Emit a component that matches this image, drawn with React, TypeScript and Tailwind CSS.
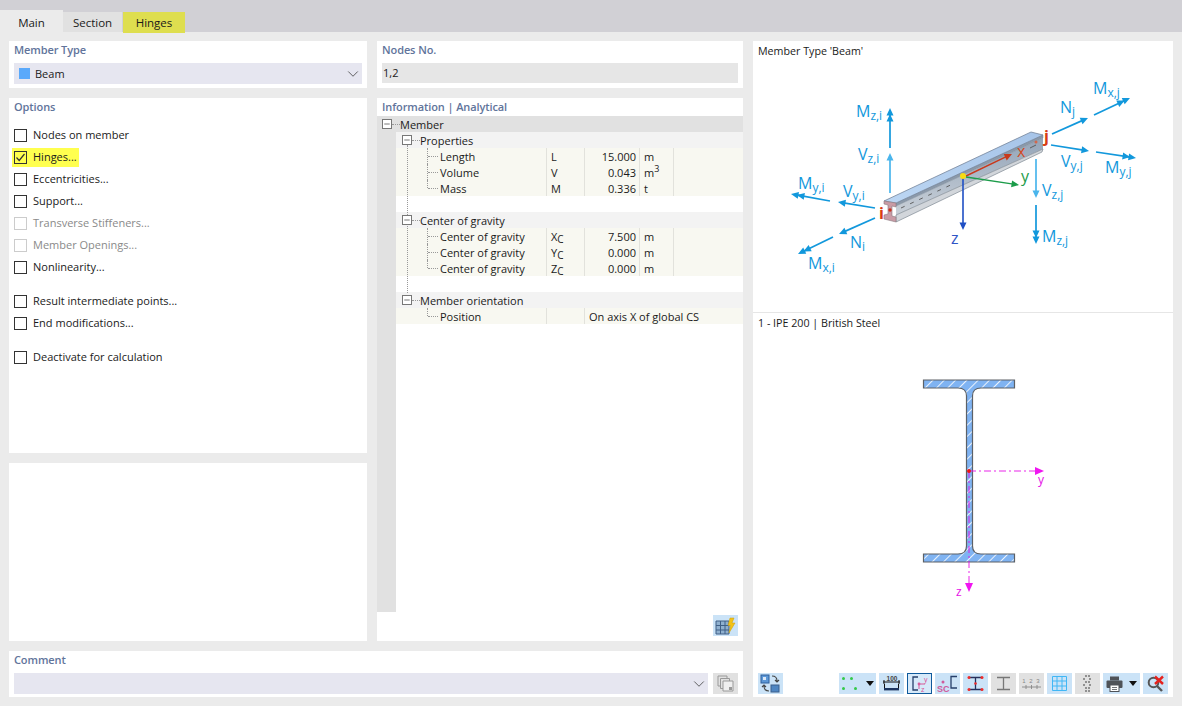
import { ChevronDown, Minus } from "lucide-react";

const options = [
  { label: "Nodes on member" },
  { label: "Hinges...", checked: true },
  { label: "Eccentricities..." },
  { label: "Support..." },
  { label: "Transverse Stiffeners...", disabled: true },
  { label: "Member Openings...", disabled: true },
  { label: "Nonlinearity..." },
  { gap: 12, label: "Result intermediate points..." },
  { label: "End modifications..." },
  { gap: 12, label: "Deactivate for calculation" },
];

function Heading({ children }: { children: React.ReactNode }) {
  return <div className="h-[18px] pl-[5px] pt-[1px] text-[11px] font-semibold leading-[16px] tracking-[-0.1px] text-[#61749b]">{children}</div>;
}

function Expander() {
  return (
    <span className="relative z-10 flex h-[10px] w-[10px] shrink-0 items-center justify-center border border-[#777] bg-white">
      <Minus size={8} strokeWidth={2} className="text-[#333]" />
    </span>
  );
}

function GroupRow({ label, top }: { label: string; top?: boolean }) {
  return (
    <div className={top ? "flex h-4 items-center bg-[#e1e1e1] pl-[5px]" : "ml-[19px] flex h-4 items-center bg-[#f3f3f3] pl-[6px]"}>
      <Expander />
      <span className="w-[8px] border-t border-dotted border-[#999]" />
      <span className="relative top-[1px]">{label}</span>
    </div>
  );
}

function DataRow({ name, sym, sub, value, unit, sup, wide, last }: { name: string; sym?: string; sub?: string; value?: string; unit?: string; sup?: string; wide?: boolean; last?: boolean }) {
  return (
    <div className="relative ml-[19px] flex h-4 items-center bg-[#f8f8f1] pt-[2px]">
      <span className={last ? "absolute left-[31px] top-0 h-[8px] border-l border-dotted border-[#999]" : "absolute left-[31px] top-0 h-4 border-l border-dotted border-[#999]"} />
      <span className="absolute left-[32px] top-[8px] w-[10px] border-t border-dotted border-[#999]" />
      <span className="w-[150px] shrink-0 pl-[44px]">{name}</span>
      <span className="-mt-[2px] flex h-4 w-[38px] shrink-0 items-center border-l border-[#e2e2dc] pl-[4px] pt-[2px]">
        {sym}
        {sub && <span className="relative top-[2px] text-[10px]">{sub}</span>}
      </span>
      {wide ? (
        <span className="-mt-[2px] flex h-4 flex-1 items-center border-l border-[#e2e2dc] pl-[4px] pt-[2px]">{value}</span>
      ) : (
        <>
          <span className="-mt-[2px] flex h-4 w-[55px] shrink-0 items-center justify-end border-l border-[#e2e2dc] pr-[3px] pt-[2px]">{value}</span>
          <span className="-mt-[2px] flex h-4 w-[34px] shrink-0 items-center border-l border-[#e2e2dc] pl-[4px] pt-[2px]">
            {unit}
            {sup && <sup className="text-[9px]">{sup}</sup>}
          </span>
          <span className="-mt-[2px] h-4 flex-1 border-l border-[#e2e2dc]" />
        </>
      )}
    </div>
  );
}

function Arrow({ x1, y1, x2, y2, color = "#1298dc", double, width = 1.7 }: { x1: number; y1: number; x2: number; y2: number; color?: string; double?: boolean; width?: number }) {
  const dx = x2 - x1;
  const dy = y2 - y1;
  const len = Math.hypot(dx, dy);
  const ux = dx / len;
  const uy = dy / len;
  const head = (d: number) => {
    const tx = x2 - ux * d;
    const ty = y2 - uy * d;
    const bx = tx - ux * 7.5;
    const by = ty - uy * 7.5;
    return `${tx},${ty} ${bx - uy * 3.5},${by + ux * 3.5} ${bx + uy * 3.5},${by - ux * 3.5}`;
  };
  return (
    <g>
      <line x1={x1} y1={y1} x2={x2 - ux * 4} y2={y2 - uy * 4} stroke={color} strokeWidth={width} />
      <polygon points={head(0)} fill={color} />
      {double && <polygon points={head(6)} fill={color} />}
    </g>
  );
}

function ForceLabel({ x, y, m, s }: { x: number; y: number; m: string; s: string }) {
  return (
    <text x={x} y={y} fill="#1298dc" fontSize="16" fontFamily="'Open Sans', sans-serif">
      {m}
      <tspan fontSize="12" dy="3">{s}</tspan>
    </text>
  );
}

function BeamDiagram() {
  return (
    <svg viewBox="753 60 420 252" className="block h-[252px] w-[420px]">
      <defs>
        <linearGradient id="top" x1="0" y1="1" x2="1" y2="0">
          <stop offset="0" stopColor="#bcd6f3" />
          <stop offset="1" stopColor="#a6c4e8" />
        </linearGradient>
        <linearGradient id="web" x1="0" y1="0" x2="0" y2="1">
          <stop offset="0" stopColor="#93a4b8" />
          <stop offset="1" stopColor="#c9d0d8" />
        </linearGradient>
      </defs>
      {/* web, between the flanges */}
      <polygon points="896,206 1043,138 1043,149 896,215" fill="url(#web)" />
      {/* bottom flange */}
      <polygon points="896,215 1043,149 1042,152 896,222" fill="#d2d6db" stroke="#7f8994" strokeWidth="0.7" />
      {/* top flange */}
      <polygon points="896,203 1043,135 1043,138 896,206" fill="#8b99aa" stroke="#7d8a99" strokeWidth="0.5" />
      <polygon points="884,201 1031,132 1043,135 896,203" fill="url(#top)" stroke="#76859a" strokeWidth="0.8" />
      <line x1="901" y1="208" x2="955" y2="183" stroke="#555" strokeWidth="0.9" strokeDasharray="4 6" />
      <line x1="1030" y1="148" x2="1036" y2="145" stroke="#555" strokeWidth="0.9" />
      {/* end face */}
      <polygon points="884,201 896,203 896,207 892,206 892,216 896,217 896,222 884,219 884,215 888,214 888,205 884,204" fill="#c99ba5" stroke="#8a7a80" strokeWidth="0.6" />
      <circle cx="890" cy="210" r="1.7" fill="#c9331f" />
      <circle cx="1036" cy="142" r="1.5" fill="#d2674c" />

      <Arrow x1={890} y1={148} x2={890} y2={108} double />
      <Arrow x1={890} y1={193} x2={890} y2={153} color="#4ab5ec" />
      <Arrow x1={830} y1={201} x2={791} y2={194} double />
      <Arrow x1={875} y1={208} x2={838} y2={202} />
      <Arrow x1={875} y1={218} x2={839} y2={234} />
      <Arrow x1={833} y1={237} x2={798} y2={254} double />
      <Arrow x1={1052} y1={134} x2={1088} y2={118} />
      <Arrow x1={1094} y1={115} x2={1130} y2={98} double />
      <Arrow x1={1051} y1={145} x2={1089} y2={151} />
      <Arrow x1={1096} y1={152} x2={1136} y2={158} double />
      <Arrow x1={1036} y1={159} x2={1036} y2={198} color="#4ab5ec" />
      <Arrow x1={1036} y1={205} x2={1036} y2={244} double />
      <Arrow x1={966} y1={176} x2={1012} y2={154} color="#c8391c" width={1.4} />
      <Arrow x1={966} y1={177} x2={1019} y2={185} color="#1c9c4a" width={1.4} />
      <Arrow x1={963} y1={177} x2={963} y2={230} color="#1f4fc4" width={1.6} />
      <circle cx="963" cy="176" r="3" fill="#f7dc12" />

      <text x="1017" y="157" fill="#d4491f" fontSize="16" fontFamily="'Open Sans', sans-serif">x</text>
      <text x="1021" y="182" fill="#1c9c4a" fontSize="16" fontFamily="'Open Sans', sans-serif">y</text>
      <text x="951" y="244" fill="#2f55c6" fontSize="16" fontFamily="'Open Sans', sans-serif">z</text>
      <text x="879" y="219" fill="#d83b12" fontSize="16" fontWeight="700" fontFamily="'Open Sans', sans-serif">i</text>
      <text x="1044" y="142" fill="#d83b12" fontSize="16" fontWeight="700" fontFamily="'Open Sans', sans-serif">j</text>

      <ForceLabel x={856} y={117} m="M" s="z,i" />
      <ForceLabel x={858} y={160} m="V" s="z,i" />
      <ForceLabel x={798} y={189} m="M" s="y,i" />
      <ForceLabel x={843} y={197} m="V" s="y,i" />
      <ForceLabel x={850} y={248} m="N" s="i" />
      <ForceLabel x={808} y={269} m="M" s="x,i" />
      <ForceLabel x={1060} y={113} m="N" s="j" />
      <ForceLabel x={1093} y={94} m="M" s="x,j" />
      <ForceLabel x={1061} y={167} m="V" s="y,j" />
      <ForceLabel x={1105} y={173} m="M" s="y,j" />
      <ForceLabel x={1042} y={196} m="V" s="z,j" />
      <ForceLabel x={1042} y={242} m="M" s="z,j" />
    </svg>
  );
}

function SectionDiagram() {
  return (
    <svg viewBox="753 331 420 342" className="block h-[342px] w-[420px]">
      <defs>
        <pattern id="hatch" width="8" height="8" patternUnits="userSpaceOnUse" patternTransform="rotate(-45)">
          <rect width="8" height="8" fill="#7fb3f2" />
          <rect width="8" height="1" fill="#eaf2fc" />
        </pattern>
      </defs>
      <path
        d="M923.5 380 H1014.5 V388 H981 Q972.5 388 972.5 396 V546 Q972.5 554 981 554 H1014.5 V562 H923.5 V554 H958 Q966.5 554 966.5 546 V396 Q966.5 388 958 388 H923.5 Z"
        fill="url(#hatch)"
        stroke="#5d6166"
        strokeWidth="1.2"
      />
      <line x1="969" y1="471" x2="1036" y2="471" stroke="#e60fe6" strokeWidth="0.9" strokeDasharray="7 3 2 3" />
      <line x1="969" y1="471" x2="969" y2="584" stroke="#e60fe6" strokeWidth="0.9" strokeDasharray="7 3 2 3" />
      <polygon points="1035,467 1044,471 1035,475" fill="#f015f0" />
      <polygon points="965,583 973,583 969,592" fill="#f015f0" />
      <circle cx="969" cy="471" r="2" fill="#f01515" />
      <text x="1038" y="484" fill="#e60fe6" fontSize="12" fontFamily="'Open Sans', sans-serif">y</text>
      <text x="956" y="596" fill="#e60fe6" fontSize="12" fontFamily="'Open Sans', sans-serif">z</text>
    </svg>
  );
}

function ToolBtn({ children, gray, active, w = "w-[25px]" }: { children: React.ReactNode; gray?: boolean; active?: boolean; w?: string }) {
  const tone = active ? "border-[1.5px] border-[#0f5a9c] bg-[#d6e9f9]" : gray ? "bg-[#e1e1e1]" : "bg-[#cbe3f7]";
  return <div className={`flex h-[21px] ${w} shrink-0 items-center justify-center ${tone}`}>{children}</div>;
}

function Caret() {
  return <svg width="8" height="5" viewBox="0 0 8 5" className="ml-[6px]"><polygon points="0,0 8,0 4,5" fill="#111" /></svg>;
}

function Toolbar() {
  return (
    <div className="flex h-[21px] items-center pl-[5px] pr-[5px]">
      <ToolBtn>
        <svg width="21" height="19" viewBox="0 0 21 19">
          <rect x="1" y="1" width="8" height="8" fill="#5c97d6" stroke="#2d5f9c" />
          <rect x="3" y="3" width="3" height="3" fill="#dbe8f6" />
          <path d="M12 2 q5 0 5 5 M15 6 l2 2 l2-2 M9 17 q-5 0-5-5 M2 13 l2-2 l2 2" fill="none" stroke="#444" strokeWidth="1.1" />
          <rect x="11" y="11" width="8" height="7" fill="#4f86c2" stroke="#3a5f8c" />
        </svg>
      </ToolBtn>
      <div className="ml-[56px]" />
      <ToolBtn w="w-[37px]">
        <svg width="19" height="15" viewBox="0 0 19 15">
          <circle cx="2.5" cy="2.5" r="1.5" fill="#34c94a" />
          <circle cx="10.5" cy="2.5" r="1.5" fill="#34c94a" />
          <circle cx="2.5" cy="12.5" r="1.5" fill="#34c94a" />
          <circle cx="14.5" cy="12.5" r="1.5" fill="#34c94a" />
        </svg>
        <Caret />
      </ToolBtn>
      <div className="ml-[3px]" />
      <ToolBtn>
        <svg width="19" height="17" viewBox="0 0 19 17">
          <text x="10" y="5.5" textAnchor="middle" fontSize="6.5" fontWeight="700" fill="#444" fontFamily="'Liberation Sans', sans-serif">100</text>
          <path d="M1 7 H18 M2 5 V9 M17 5 V9 M2.5 9 V13 M16.5 9 V13" stroke="#111" strokeWidth="1" fill="none" />
          <rect x="2" y="13" width="15" height="2.4" fill="#1d3560" />
        </svg>
      </ToolBtn>
      <div className="ml-[3px]" />
      <ToolBtn active>
        <svg width="19" height="17" viewBox="0 0 19 17">
          <path d="M8 2 H3 V15 H8" fill="none" stroke="#27406b" strokeWidth="1.3" />
          <path d="M9 9 H15 M9 9 V14" stroke="#d65a9a" strokeWidth="1" />
          <circle cx="9" cy="9" r="1.4" fill="#d65a9a" />
          <text x="14" y="7" fontSize="7" fill="#d65a9a" fontFamily="'Liberation Sans', sans-serif">y</text>
          <text x="11" y="16.5" fontSize="7" fill="#d65a9a" fontFamily="'Liberation Sans', sans-serif">z</text>
        </svg>
      </ToolBtn>
      <div className="ml-[3px]" />
      <ToolBtn>
        <svg width="21" height="18" viewBox="0 0 21 18">
          <circle cx="6" cy="7" r="1.5" fill="#cf5b9c" />
          <text x="0" y="16.5" fontSize="9" fontWeight="700" fill="#cf5b9c" fontFamily="'Liberation Sans', sans-serif">SC</text>
          <path d="M20 1.5 H14 V13 H20" fill="none" stroke="#27406b" strokeWidth="1.3" />
        </svg>
      </ToolBtn>
      <div className="ml-[3px]" />
      <ToolBtn>
        <svg width="19" height="17" viewBox="0 0 19 17">
          <path d="M3 2.5 H16 M9.5 2.5 V14.5 M3 14.5 H16" stroke="#27315c" strokeWidth="1.3" />
          <circle cx="3" cy="2.5" r="1.5" fill="#ee2b2b" />
          <circle cx="16" cy="2.5" r="1.5" fill="#ee2b2b" />
          <circle cx="9.5" cy="8.5" r="1.3" fill="#ee2b2b" />
          <circle cx="3" cy="14.5" r="1.5" fill="#ee2b2b" />
          <circle cx="16" cy="14.5" r="1.5" fill="#ee2b2b" />
        </svg>
      </ToolBtn>
      <div className="ml-[3px]" />
      <ToolBtn gray>
        <svg width="19" height="17" viewBox="0 0 19 17">
          <path d="M3 2.5 H16 M3 14.5 H16 M9.5 2.5 V14.5" stroke="#777" strokeWidth="1.3" />
        </svg>
      </ToolBtn>
      <div className="ml-[3px]" />
      <ToolBtn gray>
        <svg width="21" height="17" viewBox="0 0 21 17">
          <text x="10.5" y="7.5" textAnchor="middle" fontSize="6" letterSpacing="1" fill="#888" fontFamily="'Liberation Sans', sans-serif">1 2 3</text>
          <path d="M1 12 H20 M5 10 V14 M10.5 10 V14 M16 10 V14" stroke="#888" strokeWidth="0.9" />
        </svg>
      </ToolBtn>
      <div className="ml-[3px]" />
      <ToolBtn>
        <svg width="15" height="15" viewBox="0 0 15 15">
          <path d="M.5 .5 H14.5 V14.5 H.5 Z M5 .5 V14.5 M10 .5 V14.5 M.5 5 H14.5 M.5 10 H14.5" fill="none" stroke="#41b7f5" strokeWidth="1" />
        </svg>
      </ToolBtn>
      <div className="ml-[3px]" />
      <ToolBtn gray>
        <svg width="11" height="17" viewBox="0 0 11 17">
          <path d="M3 1 H8 M1 4 H4 M7 4 H10 M3 7 H8 M1 10 H4 M7 10 H10 M3 13 H8 M3 16 H8" stroke="#777" strokeWidth="1.4" strokeDasharray="2 1" />
        </svg>
      </ToolBtn>
      <div className="ml-[3px]" />
      <ToolBtn w="w-[37px]">
        <svg width="17" height="16" viewBox="0 0 17 16">
          <rect x="4" y="0.5" width="9" height="4" fill="#4f5358" />
          <rect x="0.5" y="4.5" width="16" height="7.5" rx="1" fill="#4f5358" />
          <rect x="4" y="9" width="9" height="6.5" fill="#fff" stroke="#4f5358" />
          <path d="M6 11.5 H11 M6 13.5 H11" stroke="#4f5358" strokeWidth="0.8" />
        </svg>
        <Caret />
      </ToolBtn>
      <div className="ml-[3px]" />
      <ToolBtn>
        <svg width="20" height="18" viewBox="0 0 20 18">
          <circle cx="7.5" cy="7.5" r="4.8" fill="none" stroke="#555" strokeWidth="2" />
          <path d="M11 11 L16 16" stroke="#555" strokeWidth="2.4" />
          <path d="M9 1.5 L17 9 M17 1.5 L9 9" stroke="#e5231f" strokeWidth="2.4" />
        </svg>
      </ToolBtn>
    </div>
  );
}

export default function App() {
  return (
    <div className="flex h-[706px] w-[1182px] flex-col overflow-hidden bg-[#ebebeb] font-['Open_Sans',sans-serif] text-[11px] text-[#1a1a1a]">
      {/* TABS */}
      <div className="flex h-[32px] shrink-0 items-end bg-[#d1d0d5] text-[11.5px]">
        <div className="flex h-[22px] w-[63px] items-center justify-center bg-[#ebebeb] pt-[3px]">Main</div>
        <div className="flex h-[20px] w-[59px] items-center justify-center bg-[#e1e1e1] pt-[2px]">Section</div>
        <div className="relative ml-[1px] -mb-[1px] flex h-[21px] w-[62px] items-center justify-center bg-[#dede4f]">Hinges</div>
      </div>

      <div className="flex flex-1 gap-[10px] px-[9px] pb-[9px] pt-[9px]">
        <div className="flex w-[734px] flex-col gap-[10px]">
          <div className="flex flex-1 gap-[10px]">
            {/* LEFT */}
            <div className="flex w-[358px] flex-col gap-[10px]">
              <div className="h-[47px] bg-white">
                <Heading>Member Type</Heading>
                <div className="mx-[5px] mt-[4px] flex h-[21px] items-center bg-[#e6e6f0] pl-[5px]">
                  <span className="h-[11px] w-[11px] bg-[#5aa9fb]" />
                  <span className="ml-[5px] flex-1 pt-[2px]">Beam</span>
                  <ChevronDown size={18} strokeWidth={1.1} className="text-[#444]" />
                </div>
              </div>

              <div className="h-[355px] bg-white">
                <Heading>Options</Heading>
                <div className="mt-[8px] flex flex-col">
                  {options.map((o) => (
                    <div key={o.label} style={{ marginTop: o.gap ?? 0 }} className={o.disabled ? "flex h-[22px] items-center pl-[5px] text-[#8a8a8a]" : "flex h-[22px] items-center pl-[5px]"}>
                      <span className={o.checked ? "-ml-[2px] flex h-[19px] items-center bg-[#ffff4f] pl-[2px] pr-[2px]" : "flex h-[19px] items-center"}>
                        <span className={o.disabled ? "flex h-[13px] w-[13px] items-center justify-center border border-[#cccccc]" : "flex h-[13px] w-[13px] items-center justify-center border border-[#333]"}>
                          {o.checked && (
                            <svg width="11" height="11" viewBox="0 0 11 11"><path d="M1.5 5.5 L4.2 8.5 L9.5 2" fill="none" stroke="#333" strokeWidth="1.2" /></svg>
                          )}
                        </span>
                        <span className="ml-[6px]">{o.label}</span>
                      </span>
                    </div>
                  ))}
                </div>
              </div>

              <div className="flex-1 bg-white" />
            </div>

            {/* MIDDLE */}
            <div className="flex flex-1 flex-col gap-[10px]">
              <div className="h-[47px] bg-white">
                <Heading>Nodes No.</Heading>
                <div className="mx-[5px] mt-[4px] flex h-[20px] items-center bg-[#e6e6e6] pl-[1px] pt-[1px]">1,2</div>
              </div>

              <div className="flex flex-1 flex-col bg-white">
                <Heading>Information | Analytical</Heading>
                <div className="relative flex-1 overflow-hidden">
                  {/* grey tree gutter */}
                  <div className="absolute bottom-[29px] left-0 top-0 w-[19px] bg-[#e1e1e1]" />
                  <div className="relative">
                    <GroupRow top label="Member" />
                    <GroupRow label="Properties" />
                    <DataRow name="Length" sym="L" value="15.000" unit="m" />
                    <DataRow name="Volume" sym="V" value="0.043" unit="m" sup="3" />
                    <DataRow name="Mass" sym="M" value="0.336" unit="t" last />
                    <div className="h-4" />
                    <GroupRow label="Center of gravity" />
                    <DataRow name="Center of gravity" sym="X" sub="C" value="7.500" unit="m" />
                    <DataRow name="Center of gravity" sym="Y" sub="C" value="0.000" unit="m" />
                    <DataRow name="Center of gravity" sym="Z" sub="C" value="0.000" unit="m" last />
                    <div className="h-4" />
                    <GroupRow label="Member orientation" />
                    <DataRow name="Position" wide value="On axis X of global CS" last />
                  </div>
                  <span className="absolute left-[30px] top-[29px] h-[148px] border-l border-dotted border-[#999]" />
                  <div className="absolute bottom-[5px] right-[5px] flex h-[21px] w-[25px] items-center justify-center bg-[#cbe3f7]">
                    <svg width="21" height="18" viewBox="0 0 21 18">
                      <path d="M1 4 H14 V17 H1 Z M5.5 4 V17 M10 4 V17 M1 8.5 H14 M1 13 H14" fill="#8fb0cf" stroke="#3f5f86" strokeWidth="1" />
                      <path d="M15 1 H19 L17 6 H20 L14 16 L15.5 8.5 H13 Z" fill="#f4c316" stroke="#c99a0a" strokeWidth="0.5" />
                    </svg>
                  </div>
                </div>
              </div>
            </div>
          </div>

          {/* COMMENT */}
          <div className="h-[46px] bg-white">
            <Heading>Comment</Heading>
            <div className="mt-[4px] flex items-center pl-[5px] pr-[5px]">
              <div className="flex h-[21px] flex-1 items-center justify-end bg-[#e6e6f0]">
                <ChevronDown size={18} strokeWidth={1.1} className="text-[#444]" />
              </div>
              <div className="ml-[5px] flex h-[21px] w-[25px] items-center justify-center bg-[#e1e1e1]">
                <svg width="17" height="17" viewBox="0 0 17 17">
                  <path d="M1 1 H10 V11 H1 Z" fill="#e1e1e1" stroke="#999" />
                  <path d="M3.5 3.5 H12.5 V13.5 H3.5 Z" fill="#e1e1e1" stroke="#999" />
                  <path d="M6 6 H16 V16 H6 Z" fill="#efefef" stroke="#999" />
                  <rect x="12" y="12" width="3" height="3" fill="#999" />
                </svg>
              </div>
            </div>
          </div>
        </div>

        {/* RIGHT */}
        <div className="flex w-[420px] flex-col bg-white text-[10.7px]">
          <div className="h-[272px] border-b border-[#e6e6e6]">
            <div className="h-[19px] pl-[5px] pt-[2px] leading-[16px]">Member Type 'Beam'</div>
            <BeamDiagram />
          </div>
          <div className="flex flex-1 flex-col">
            <div className="h-[18px] pl-[5px] pt-[2px] leading-[16px]">1 - IPE 200 | British Steel</div>
            <SectionDiagram />
            <Toolbar />
          </div>
        </div>
      </div>
    </div>
  );
}
